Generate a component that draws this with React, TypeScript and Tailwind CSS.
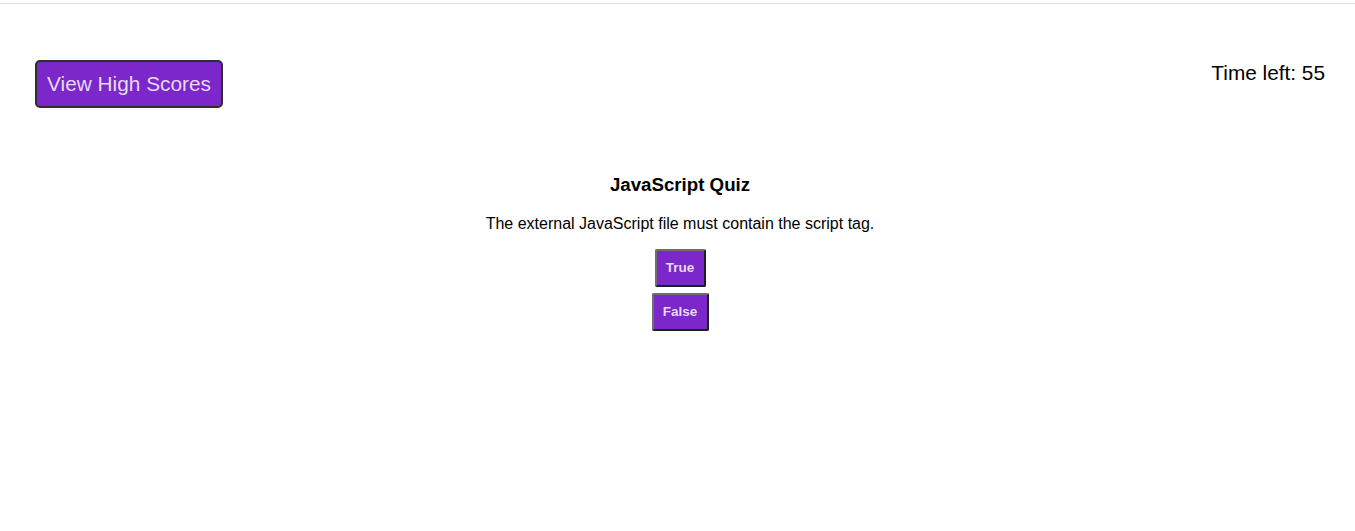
export default function App() {
  return (
    <div className="min-h-screen bg-white font-['Liberation_Sans',Arial,sans-serif] text-black">
      <div className="h-[3px]" />
      <div className="h-px bg-[#e0e0e0]" />

      {/* Header */}
      <div className="flex items-start justify-between pl-[35px] pr-[30px] pt-[56px]">
        <button className="h-[48px] w-[188px] rounded-[5px] border-2 border-[#2e2e2e] bg-[#7b27c9] text-[20.8px] text-[#e6daf2]">
          View High Scores
        </button>
        <div className="pt-[1px] text-[20.8px] leading-[24px]">Time left: 55</div>
      </div>

      {/* Quiz */}
      <div className="mt-[66px] flex flex-col items-center pl-[5px]">
        <h1 className="text-[18.7px] font-bold leading-[22px]">JavaScript Quiz</h1>
        <p className="mt-[19px] text-[16px] leading-[18px]">
          The external JavaScript file must contain the script tag.
        </p>
        <div className="mt-[16px] flex flex-col items-center gap-[6px]">
          <button className="h-[38px] w-[51px] rounded-[2px] border-2 border-t-[#6e6e6e] border-l-[#6e6e6e] border-r-[#1f1f1f] border-b-[#1f1f1f] bg-[#7b27c9] text-[13.5px] font-bold text-[#e6daf2]">
            True
          </button>
          <button className="h-[38px] w-[57px] rounded-[2px] border-2 border-t-[#6e6e6e] border-l-[#6e6e6e] border-r-[#1f1f1f] border-b-[#1f1f1f] bg-[#7b27c9] text-[13.5px] font-bold text-[#e6daf2]">
            False
          </button>
        </div>
      </div>
    </div>
  )
}
